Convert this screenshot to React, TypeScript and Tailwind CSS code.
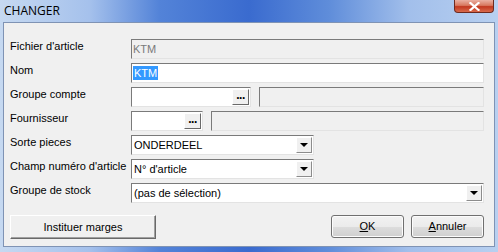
import React from 'react'

const font = { fontFamily: '"Liberation Sans", Arial, sans-serif' }

function Sunken({ className, children }: { className?: string; children?: React.ReactNode }) {
  return (
    <div
      className={
        'flex items-center border border-t-[#7a7a7a] border-l-[#7a7a7a] border-b-[#e3e3e3] border-r-[#e3e3e3] ' +
        (className || '')
      }
    >
      {children}
    </div>
  )
}

function DotsButton() {
  return (
    <div className="ml-auto mr-[1px] flex h-[16px] w-[17px] items-end justify-center border border-t-white border-l-white border-b-[#696969] border-r-[#696969] bg-[#f0f0f0] pb-[3px] text-[12px] font-bold leading-none text-black">
      <span className="tracking-[-0.5px]">...</span>
    </div>
  )
}

function ArrowButton() {
  return (
    <div className="ml-auto mr-[1px] flex h-[16px] w-[16px] items-center justify-center border border-t-white border-l-white border-b-[#8c8c8c] border-r-[#8c8c8c] bg-[#f0f0f0]">
      <div className="h-0 w-0 border-x-[4px] border-t-[4px] border-x-transparent border-t-black" />
    </div>
  )
}

function Row({ label, children }: { label: string; children: React.ReactNode }) {
  return (
    <div className="flex h-[20px] items-start">
      <div className="w-[121px] whitespace-nowrap pt-[1px] text-[11px] leading-[13px] text-black">{label}</div>
      {children}
    </div>
  )
}

export default function App() {
  return (
    <div
      className="flex h-[252px] w-[498px] flex-col overflow-hidden bg-[linear-gradient(90deg,#c6d9f1_0%,#a5c1ec_18%,#5383d8_32%,#3a6bcf_50%,#5f8dda_66%,#a2bfeb_82%,#b8d0f0_100%)] px-[3px] pb-[5px]"
      style={font}
    >
      <div className="relative flex h-[22px] shrink-0 items-start">
        <span className="pl-[1px] pt-[3px] text-[12px] leading-[15px] text-black" style={{ fontFamily: '"Open Sans", "Noto Sans", sans-serif' }}>
          CHANGER
        </span>
        <div className="absolute right-[1px] top-0 flex h-[13px] w-[40px] items-center justify-center rounded-b-[4px] border border-t-0 border-[#6e2a1f] bg-[linear-gradient(180deg,#eab0a2_0%,#d8785f_45%,#c2381f_55%,#d86a4c_100%)]">
          <svg width="11" height="9" viewBox="0 0 11 9">
            <path d="M1.5 1 L9.5 8 M9.5 1 L1.5 8" stroke="#fff" strokeWidth="2.2" strokeLinecap="square" />
          </svg>
        </div>
      </div>
      <div className="flex flex-1 flex-col border border-[#7f93b4] bg-[#f0f0f0] pl-[6px] pr-[10px] pt-[16px]">
        <div className="flex flex-col gap-[4px]">
          <Row label="Fichier d'article">
            <Sunken className="h-[20px] flex-1 bg-[#f0f0f0] pl-[1px]">
              <span className="text-[11px] text-[#7a7a7a]">KTM</span>
            </Sunken>
          </Row>
          <Row label="Nom">
            <Sunken className="h-[20px] flex-1 bg-white pl-[1px]">
              <span className="bg-[#3399ff] px-[1px] text-[11px] leading-[14px] text-white">KTM</span>
            </Sunken>
          </Row>
          <Row label="Groupe compte">
            <Sunken className="h-[20px] w-[120px] bg-white">
              <DotsButton />
            </Sunken>
            <Sunken className="ml-[8px] h-[20px] flex-1 bg-[#f0f0f0]" />
          </Row>
          <Row label="Fournisseur">
            <Sunken className="h-[20px] w-[72px] bg-white">
              <DotsButton />
            </Sunken>
            <Sunken className="ml-[8px] h-[20px] flex-1 bg-[#f0f0f0]" />
          </Row>
          <Row label="Sorte pieces">
            <Sunken className="h-[20px] w-[183px] bg-white pl-[2px]">
              <span className="text-[11px] text-black">ONDERDEEL</span>
              <ArrowButton />
            </Sunken>
          </Row>
          <Row label="Champ numéro d'article">
            <Sunken className="h-[20px] w-[183px] bg-white pl-[2px]">
              <span className="text-[11px] text-black">N° d'article</span>
              <ArrowButton />
            </Sunken>
          </Row>
          <Row label="Groupe de stock">
            <Sunken className="h-[20px] flex-1 bg-white pl-[2px]">
              <span className="text-[11px] text-black">(pas de sélection)</span>
              <ArrowButton />
            </Sunken>
          </Row>
        </div>
        <div className="mt-[12px] flex items-start">
          <button className="h-[24px] w-[146px] border border-t-white border-l-white border-b-[#696969] border-r-[#696969] bg-[#f0f0f0] text-[11px] text-black shadow-[inset_-1px_-1px_0_#a0a0a0]">
            Instituer marges
          </button>
          <button className="ml-auto h-[23px] w-[73px] rounded-[3px] border border-[#707070] bg-[linear-gradient(180deg,#f2f2f2_0%,#ebebeb_50%,#dddddd_51%,#cfcfcf_100%)] text-[11px] text-black shadow-[inset_0_0_0_1px_#fcfcfc]">
            <span className="underline">O</span>K
          </button>
          <button className="ml-[7px] h-[23px] w-[73px] rounded-[3px] border border-[#707070] bg-[linear-gradient(180deg,#f2f2f2_0%,#ebebeb_50%,#dddddd_51%,#cfcfcf_100%)] text-[11px] text-black shadow-[inset_0_0_0_1px_#fcfcfc]">
            <span className="underline">A</span>nnuler
          </button>
        </div>
      </div>
    </div>
  )
}
